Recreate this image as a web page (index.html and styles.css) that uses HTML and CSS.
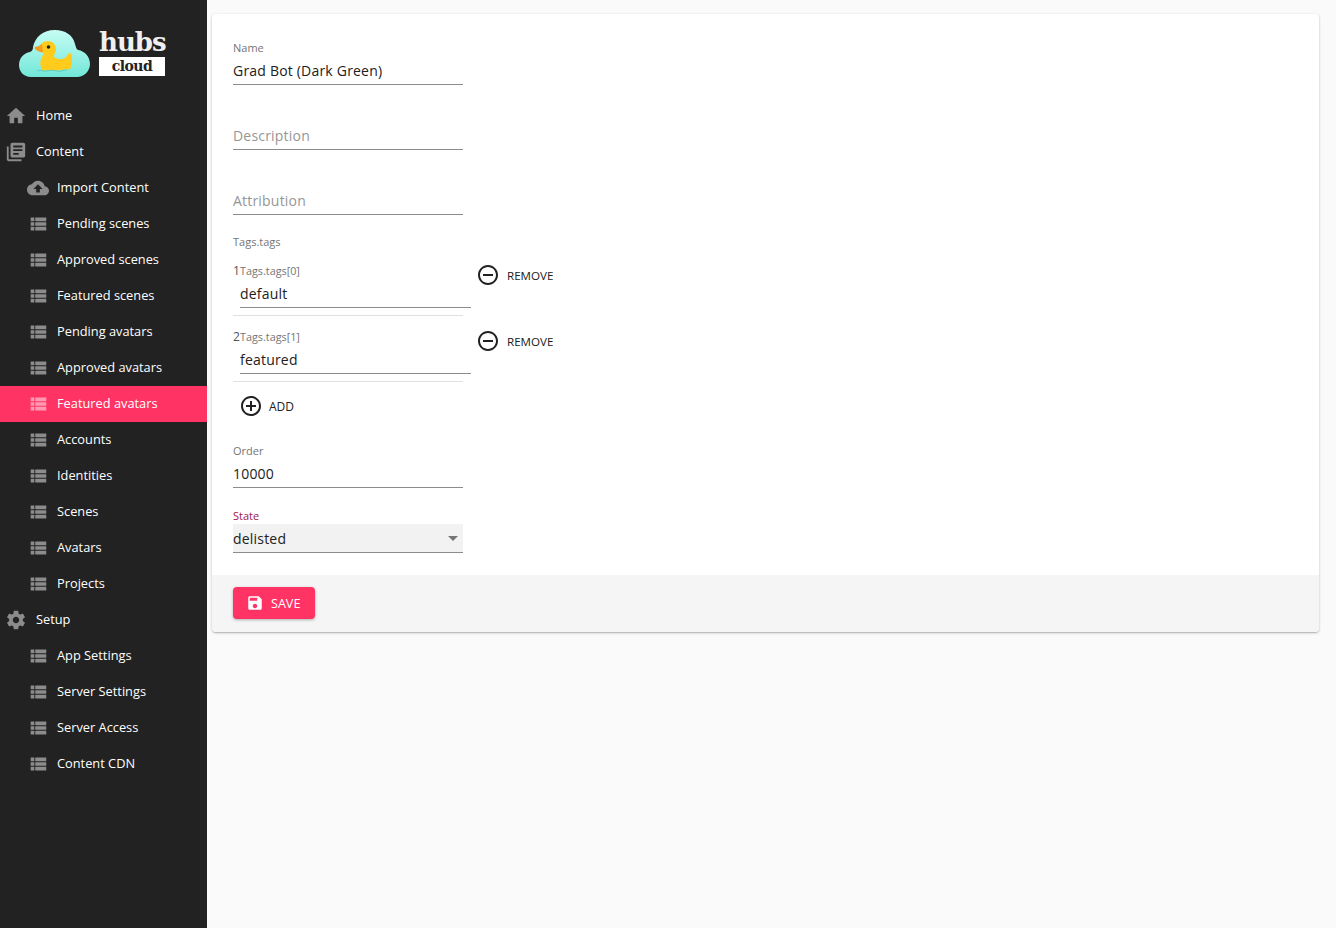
FILE: index.html
```
<!DOCTYPE html>
<html lang="en">
<head>
<meta charset="utf-8">
<title>Hubs Cloud Admin</title>
<link rel="stylesheet" href="styles.css">
</head>
<body>
<svg class="defs" width="0" height="0" aria-hidden="true">
  <defs>
    <symbol id="i-list" viewBox="0 0 24 24"><path d="M4 14h4v-4H4v4zm0 5h4v-4H4v4zM4 9h4V5H4v4zm5 5h12v-4H9v4zm0 5h12v-4H9v4zM9 5v4h12V5H9z"/></symbol>
    <symbol id="i-remove" viewBox="0 0 24 24"><path d="M7 11v2h10v-2H7zm5-9C6.48 2 2 6.48 2 12s4.48 10 10 10 10-4.48 10-10S17.52 2 12 2zm0 18c-4.41 0-8-3.59-8-8s3.59-8 8-8 8 3.59 8 8-3.59 8-8 8z"/></symbol>
  </defs>
</svg>
<aside class="sidebar">
  <div class="brand">
    <svg class="brand-mark" viewBox="0 0 72 48" width="72" height="48">
      <defs><linearGradient id="cloudfill" x1="0" y1="0" x2="0" y2="1"><stop offset="0" stop-color="#c6fdf4"/><stop offset="1" stop-color="#72e7d8"/></linearGradient></defs>
      <path fill="url(#cloudfill)" d="M12 48C5 48 0 43 0 36c0-7 5-12 11-13 2-1 3-2 3-5C16 8 24 1 36 1c10 0 18 5 20 14 1 3 1 5 3 6 7 1 12 7 12 14 0 7-6 13-13 13z"/>
      <path fill="#ffcc1e" d="M22 39c-1-4-1-8 1-11 1-2 2-3 1-4-2-1-3-2-3-3l-1-1c1-5 4-8 9-8 5 0 8 4 8 8 0 3-2 5-2 7 0 2 3 3 6 3 4 0 6-1 8-5l3-1c1 3 1 6 1 9 0 3-1 5-2 7-2 1-4 1-6 0-2 1-4 2-6 1-2 1-4 1-6 0-2 1-4 1-6 0-2 1-3 1-5-2z"/>
      <path fill="#f59a23" d="M23 15l-3 2-4 1c-1 1 0 2 1 3l4 2h3z"/>
      <circle cx="29.500" cy="18" r="1.800" fill="#222"/>
      <path fill="none" stroke="#58cfc4" stroke-width="1" d="M18 42c4-2 6 1 10 0s6-1 10 0 6-1 10-1"/>
    </svg>
    <div class="brand-text">
      <span class="brand-hubs">hubs</span>
      <span class="brand-cloud">cloud</span>
    </div>
  </div>
  <nav class="menu">
    <a class="item top"><svg class="ico" viewBox="0 0 24 24"><path d="M10 20v-6h4v6h5v-8h3L12 3 2 12h3v8z"/></svg><span>Home</span></a>
    <a class="item top"><svg class="ico" viewBox="0 0 24 24"><path d="M4 6H2v14c0 1.1.9 2 2 2h14v-2H4V6zm16-4H8c-1.1 0-2 .9-2 2v12c0 1.1.9 2 2 2h12c1.1 0 2-.9 2-2V4c0-1.1-.9-2-2-2zm-1 9H9V9h10v2zm-4 4H9v-2h6v2zm4-8H9V5h10v2z"/></svg><span>Content</span></a>
    <a class="item sub"><svg class="ico" viewBox="0 0 24 24"><path d="M19.35 10.04C18.67 6.59 15.64 4 12 4 9.11 4 6.6 5.64 5.35 8.04 2.34 8.36 0 10.91 0 14c0 3.31 2.69 6 6 6h13c2.76 0 5-2.24 5-5 0-2.64-2.05-4.78-4.65-4.96zM14 13v4h-4v-4H7l5-5 5 5h-3z"/></svg><span>Import Content</span></a>
    <a class="item sub"><svg class="ico"><use href="#i-list"/></svg><span>Pending scenes</span></a>
    <a class="item sub"><svg class="ico"><use href="#i-list"/></svg><span>Approved scenes</span></a>
    <a class="item sub"><svg class="ico"><use href="#i-list"/></svg><span>Featured scenes</span></a>
    <a class="item sub"><svg class="ico"><use href="#i-list"/></svg><span>Pending avatars</span></a>
    <a class="item sub"><svg class="ico"><use href="#i-list"/></svg><span>Approved avatars</span></a>
    <a class="item sub active"><svg class="ico"><use href="#i-list"/></svg><span>Featured avatars</span></a>
    <a class="item sub"><svg class="ico"><use href="#i-list"/></svg><span>Accounts</span></a>
    <a class="item sub"><svg class="ico"><use href="#i-list"/></svg><span>Identities</span></a>
    <a class="item sub"><svg class="ico"><use href="#i-list"/></svg><span>Scenes</span></a>
    <a class="item sub"><svg class="ico"><use href="#i-list"/></svg><span>Avatars</span></a>
    <a class="item sub"><svg class="ico"><use href="#i-list"/></svg><span>Projects</span></a>
    <a class="item top"><svg class="ico" viewBox="0 0 24 24"><path d="M19.43 12.98c.04-.32.07-.64.07-.98s-.03-.66-.07-.98l2.11-1.65c.19-.15.24-.42.12-.64l-2-3.46c-.12-.22-.39-.3-.61-.22l-2.49 1c-.52-.4-1.08-.73-1.69-.98l-.38-2.65C14.46 2.18 14.25 2 14 2h-4c-.25 0-.46.18-.49.42l-.38 2.65c-.61.25-1.17.59-1.69.98l-2.49-1c-.23-.09-.49 0-.61.22l-2 3.46c-.13.22-.07.49.12.64l2.11 1.65c-.04.32-.07.65-.07.98s.03.66.07.98l-2.11 1.65c-.19.15-.24.42-.12.64l2 3.46c.12.22.39.3.61.22l2.49-1c.52.4 1.08.73 1.69.98l.38 2.65c.03.24.24.42.49.42h4c.25 0 .46-.18.49-.42l.38-2.65c.61-.25 1.17-.59 1.69-.98l2.49 1c.23.09.49 0 .61-.22l2-3.46c.12-.22.07-.49-.12-.64l-2.11-1.65zM12 15.5c-1.93 0-3.5-1.57-3.5-3.5s1.57-3.5 3.5-3.5 3.5 1.57 3.5 3.5-1.57 3.5-3.5 3.5z"/></svg><span>Setup</span></a>
    <a class="item sub"><svg class="ico"><use href="#i-list"/></svg><span>App Settings</span></a>
    <a class="item sub"><svg class="ico"><use href="#i-list"/></svg><span>Server Settings</span></a>
    <a class="item sub"><svg class="ico"><use href="#i-list"/></svg><span>Server Access</span></a>
    <a class="item sub"><svg class="ico"><use href="#i-list"/></svg><span>Content CDN</span></a>
  </nav>
</aside>
<main class="main">
  <section class="card">
    <form class="form">
      <div class="field">
        <div class="label">Name</div>
        <div class="value">Grad Bot (Dark Green)</div>
      </div>
      <div class="field">
        <div class="label"></div>
        <div class="value empty">Description</div>
      </div>
      <div class="field">
        <div class="label"></div>
        <div class="value empty">Attribution</div>
      </div>
      <div class="label tags-label">Tags.tags</div>
      <div class="tag-row">
        <div class="tag-main">
          <div class="tag-head"><span class="num">1</span><span class="label tag-label">Tags.tags[0]</span></div>
          <div class="value tag-value">default</div>
          <div class="divider"></div>
        </div>
        <button type="button" class="link-btn remove"><svg class="act"><use href="#i-remove"/></svg><span>REMOVE</span></button>
      </div>
      <div class="tag-row">
        <div class="tag-main">
          <div class="tag-head"><span class="num">2</span><span class="label tag-label">Tags.tags[1]</span></div>
          <div class="value tag-value">featured</div>
          <div class="divider"></div>
        </div>
        <button type="button" class="link-btn remove"><svg class="act"><use href="#i-remove"/></svg><span>REMOVE</span></button>
      </div>
      <button type="button" class="link-btn add"><svg class="act" viewBox="0 0 24 24"><path d="M13 7h-2v4H7v2h4v4h2v-4h4v-2h-4V7zm-1-5C6.48 2 2 6.48 2 12s4.48 10 10 10 10-4.48 10-10S17.52 2 12 2zm0 18c-4.41 0-8-3.59-8-8s3.59-8 8-8 8 3.59 8 8-3.59 8-8 8z"/></svg><span>ADD</span></button>
      <div class="field order">
        <div class="label">Order</div>
        <div class="value">10000</div>
      </div>
      <div class="field state">
        <div class="label state-label">State</div>
        <div class="select"><span>delisted</span><i class="caret"></i></div>
      </div>
    </form>
    <div class="toolbar">
      <button type="button" class="save"><svg class="save-ico" viewBox="0 0 24 24"><path d="M17 3H5c-1.11 0-2 .9-2 2v14c0 1.1.89 2 2 2h14c1.1 0 2-.9 2-2V7l-4-4zm-5 16c-1.66 0-3-1.34-3-3s1.34-3 3-3 3 1.34 3 3-1.34 3-3 3zm3-10H5V5h10v4z"/></svg><span>SAVE</span></button>
    </div>
  </section>
</main>
</body>
</html>
```
FILE: styles.css
```
* { box-sizing: border-box; }
html, body { margin: 0; height: 100%; }
body {
  display: flex;
  min-height: 928px;
  background: #fafafa;
  font-family: "Open Sans", sans-serif;
  color: #212121;
  overflow: hidden;
}
.defs { position: absolute; }

.sidebar { width: 207px; flex: none; background: #222222; color: #fff; }
.brand { height: 98px; display: flex; padding: 29px 0 0 19px; gap: 8px; }
.brand-mark { display: block; }
.brand-text { width: 66px; display: flex; flex-direction: column; }
.brand-hubs { font-family: "DejaVu Serif", serif; font-weight: bold; font-size: 26px; line-height: 26px; letter-spacing: -1px; color: #f0f0f0; height: 28px; white-space: nowrap; }
.brand-cloud { height: 19px; background: #fff; color: #222; font-family: "DejaVu Serif", serif; font-weight: bold; font-size: 14px; line-height: 19px; letter-spacing: -0.5px; text-align: center; }

.menu { display: flex; flex-direction: column; }
.item { height: 36px; display: flex; align-items: center; font-size: 12.8px; color: #fff; }
.item.top { padding-left: 5px; }
.item.sub { padding-left: 27px; }
.ico { width: 22px; height: 22px; fill: #8c8c8c; flex: none; }
.item span { margin-bottom: 2px; }
.item.top span { margin-left: 9px; }
.item.sub span { margin-left: 8px; }
.item.active { background: #ff3464; }
.item.active .ico { fill: #ff99b1; }

.main { flex: 1; padding: 14px 17px 0 5px; }
.card {
  background: #fff;
  border-radius: 4px;
  box-shadow: 0 1px 3px rgba(0,0,0,.2), 0 1px 1px rgba(0,0,0,.14);
  overflow: hidden;
}
.form { padding: 27px 21px 0; height: 561px; }

.field { width: 230px; margin-bottom: 21px; }
.label { font-size: 11px; line-height: 14px; height: 14px; color: #757575; }
.tag-label { font-size: 10.8px; }
.value {
  margin-top: 4px;
  height: 26px;
  font-size: 14px;
  line-height: 24px;
  letter-spacing: 0.2px;
  color: #212121;
  border-bottom: 1px solid #8c8c8c;
}
.value.empty { color: #969696; }

.tags-label { margin-top: -1px; margin-bottom: 14px; }
.tag-row { display: flex; height: 66px; align-items: flex-start; }
.tag-main { width: 230px; flex: none; }
.tag-head { display: flex; align-items: center; height: 16px; }
.num { font-size: 12px; color: #555; line-height: 16px; width: 7px; }
.tag-value { width: 231px; margin: 3px 0 0 7px; }
.divider { height: 1px; background: #e0e0e0; margin-top: 7px; }

.link-btn {
  border: 0;
  background: none;
  padding: 0;
  display: flex;
  align-items: center;
  font-family: inherit;
  font-size: 12px;
  color: #212121;
}
.act { width: 24px; height: 24px; fill: #212121; flex: none; }
.remove { margin: 0 0 0 13px; gap: 7px; font-size: 11.6px; }
.add { margin: -1px 0 0 6px; gap: 6px; height: 24px; }

.order { margin-top: 26px; margin-bottom: 21px; }
.state { margin-bottom: 0; }
.state-label { color: #a3154a; }
.select {
  margin-top: 1px;
  height: 29px;
  display: flex;
  align-items: center;
  justify-content: space-between;
  background: #f2f2f2;
  border-bottom: 1px solid #8c8c8c;
  font-size: 14px;
  letter-spacing: 0.2px;
  padding-right: 5px;
}
.caret { width: 0; height: 0; border: 5px solid transparent; border-top-color: #757575; border-bottom-width: 0; }

.toolbar { height: 57px; background: #f5f5f5; padding: 12px 21px; }
.save {
  width: 82px;
  height: 32px;
  border: 0;
  border-radius: 4px;
  background: #ff3464;
  color: #fff;
  font-family: inherit;
  font-size: 12.6px;
  display: flex;
  align-items: center;
  padding: 0 0 0 13px;
  gap: 7px;
  box-shadow: 0 1px 3px rgba(0,0,0,.3);
}
.save-ico { width: 18px; height: 18px; fill: #fff; flex: none; }
```
